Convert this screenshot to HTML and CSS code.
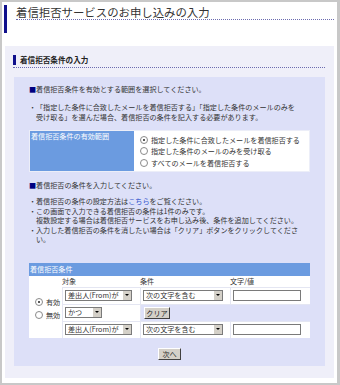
FILE: index.html
```html
<!DOCTYPE html>
<html lang="ja">
<head>
<meta charset="utf-8">
<link rel="stylesheet" href="styles.css">
</head>
<body>
<div class="page">
  <div class="title"><h1>着信拒否サービスのお申し込みの入力</h1></div>
  <div class="panel">
    <h2 class="sec"><span>着信拒否条件の入力</span></h2>
    <div class="inner">
      <p class="lead lead1"><span class="sq">■</span>着信拒否条件を有効とする範囲を選択してください。</p>
      <ul class="notes notes1">
        <li><span class="dot">・</span><span>「指定した条件に合致したメールを着信拒否する」「指定した条件のメールのみを<br>受け取る」を選んだ場合、着信拒否の条件を記入する必要があります。</span></li>
      </ul>
      <div class="scope">
        <div class="scope-lbl">着信拒否条件の有効範囲</div>
        <div class="scope-opts">
          <div class="opt"><span class="radio on"></span>指定した条件に合致したメールを着信拒否する</div>
          <div class="opt"><span class="radio"></span>指定した条件のメールのみを受け取る</div>
          <div class="opt"><span class="radio"></span>すべてのメールを着信拒否する</div>
        </div>
      </div>
      <p class="lead lead2"><span class="sq">■</span>着信拒否の条件を入力してください。</p>
      <ul class="notes notes2">
        <li><span class="dot">・</span><span>着信拒否の条件の設定方法は<a class="link">こちら</a>をご覧ください。</span></li>
        <li><span class="dot">・</span><span>この画面で入力できる着信拒否の条件は1件のみです。<br>複数設定する場合は着信拒否サービスをお申し込み後、条件を追加してください。</span></li>
        <li><span class="dot">・</span><span>入力した着信拒否の条件を消したい場合は「クリア」ボタンをクリックしてくださ<br>い。</span></li>
      </ul>
      <div class="cond">
        <div class="cond-head">着信拒否条件</div>
        <div class="cond-grid">
          <div class="c-radio">
            <div class="ropt"><span class="radio on"></span>有効</div>
            <div class="ropt"><span class="radio"></span>無効</div>
          </div>
          <div class="c-h">対象</div>
          <div class="c-h">条件</div>
          <div class="c-h">文字/値</div>
          <div class="c"><span class="sel w67"><span class="sel-t">差出人(From)が</span><span class="arr"></span></span></div>
          <div class="c"><span class="sel w80"><span class="sel-t">次の文字を含む</span><span class="arr"></span></span></div>
          <div class="c"><span class="inp"></span></div>
          <div class="c"><span class="sel w37"><span class="sel-t">かつ</span><span class="arr"></span></span></div>
          <div class="c c-span"><span class="btn">クリア</span></div>
          <div class="c"><span class="sel w67"><span class="sel-t">差出人(From)が</span><span class="arr"></span></span></div>
          <div class="c"><span class="sel w80"><span class="sel-t">次の文字を含む</span><span class="arr"></span></span></div>
          <div class="c"><span class="inp"></span></div>
        </div>
      </div>
      <div class="next"><span class="btn">次へ</span></div>
    </div>
  </div>
</div>
</body>
</html>
```
FILE: styles.css
```css
html, body {
  margin: 0;
  padding: 0;
}
body {
  background: #c8c8c8;
  font-family: "Noto Sans CJK JP", "Noto Sans", sans-serif;
  color: #333;
  font-size: 7.1px;
}
.page {
  margin: 2px 3px 0 2px;
  width: 335px;
  height: 381px;
  background: #fff;
  padding-top: 3px;
  box-sizing: border-box;
  overflow: hidden;
}
.title {
  margin-left: 2px;
  border-left: 3px solid #10108c;
  height: 28px;
  padding-left: 9px;
  padding-right: 3px;
}
.title h1 {
  margin: 0;
  font-size: 11.4px;
  font-weight: normal;
  line-height: 14px;
  color: #333;
  border-bottom: 1px dotted #6c6cb0;
}
.panel {
  margin: 13px 3px 0 3px;
  height: 332px;
  background: #efeff9;
  padding-top: 9px;
  box-sizing: border-box;
}
.sec {
  margin: 0 9px 0 8px;
  padding-bottom: 2px;
  border-bottom: 1px dotted #6c6cb0;
  font-size: 7.6px;
  font-weight: bold;
}
.sec span {
  display: block;
  height: 10px;
  line-height: 10px;
  border-left: 3px solid #10108c;
  padding-left: 4px;
  color: #222;
}
.inner {
  margin: 9px 9px 0 9px;
  height: 289px;
  background: #dde0f8;
  padding: 7px 15px 0 15px;
  box-sizing: border-box;
}
.lead {
  margin: 0;
  line-height: 10px;
  white-space: nowrap;
}
.sq {
  color: #000080;
}
.notes {
  list-style: none;
  margin: 0;
  padding: 0;
  line-height: 9.5px;
  white-space: nowrap;
}
.notes li {
  display: flex;
}
.dot {
  width: 7px;
  flex: none;
}
.notes1 {
  margin-top: 8px;
  line-height: 10px;
}
.link {
  color: #3355cc;
}
.scope {
  margin-top: 8px;
  display: flex;
  height: 40px;
  border: 1px solid #eceef8;
  background: #fff;
}
.scope-lbl {
  width: 102px;
  background: #6b9be0;
  color: #fff;
  padding: 1px 1px;
  line-height: 9px;
}
.scope-opts {
  flex: 1;
  padding: 3px 0 0 6px;
}
.opt {
  display: flex;
  align-items: center;
  height: 11.5px;
  white-space: nowrap;
}
.radio {
  display: inline-block;
  width: 6px;
  height: 6px;
  border-radius: 50%;
  border: 1px solid #8a8a8a;
  background: #fff;
  margin-right: 3px;
  position: relative;
  flex: none;
}
.radio.on::after {
  content: "";
  position: absolute;
  left: 2px;
  top: 2px;
  width: 2px;
  height: 2px;
  border-radius: 50%;
  background: #222;
}
.lead2 {
  margin-top: 8px;
}
.notes2 {
  margin-top: 7px;
}
.cond {
  margin-top: 18px;
}
.cond-head {
  height: 13px;
  line-height: 13px;
  background: #6b9be0;
  color: #fff;
  padding-left: 1px;
}
.cond-grid {
  display: grid;
  grid-template-columns: 33px 78px 90px 80px;
  grid-template-rows: 11px 17px 17px 17px;
  background: #fff;
}
.c-radio {
  grid-row: 1 / 5;
  grid-column: 1;
  display: flex;
  flex-direction: column;
  justify-content: center;
  padding: 4px 0 0 6px;
}
.ropt {
  display: flex;
  align-items: center;
  height: 13px;
}
.c-h {
  line-height: 11px;
  padding-left: 0;
}
.c {
  display: flex;
  align-items: center;
  padding-left: 2px;
  border-top: 1px solid #e4e6f2;
  border-left: 1px solid #e4e6f2;
}
.c-span {
  grid-column: span 2;
  background: #dde0f8;
}
.sel {
  display: inline-flex;
  height: 11px;
  box-sizing: border-box;
  border: 1px solid #7a7a7a;
  background: #fff;
  align-items: stretch;
}
.sel-t {
  flex: 1;
  line-height: 9px;
  padding-left: 2px;
  white-space: nowrap;
  overflow: hidden;
}
.arr {
  width: 8px;
  background: #d4d0c8;
  border-left: 1px solid #fff;
  position: relative;
}
.arr::after {
  content: "";
  position: absolute;
  left: 2px;
  top: 3px;
  border-left: 2px solid transparent;
  border-right: 2px solid transparent;
  border-top: 2px solid #000;
}
.w67 { width: 67px; }
.w80 { width: 80px; }
.w37 { width: 37px; }
.inp {
  display: inline-block;
  width: 68px;
  height: 11px;
  box-sizing: border-box;
  border: 1px solid #7a7a7a;
  background: #fff;
}
.btn {
  display: inline-block;
  height: 12px;
  line-height: 10px;
  padding: 0;
  text-align: center;
  box-sizing: border-box;
  background: #d4d0c8;
  border: 1px solid;
  border-color: #fff #404040 #404040 #fff;
  color: #222;
  white-space: nowrap;
}
.c-span .btn {
  margin-left: 1px;
  width: 26px;
}
.next {
  margin-top: 10px;
  text-align: center;
}
.next .btn {
  width: 23px;
}
```
